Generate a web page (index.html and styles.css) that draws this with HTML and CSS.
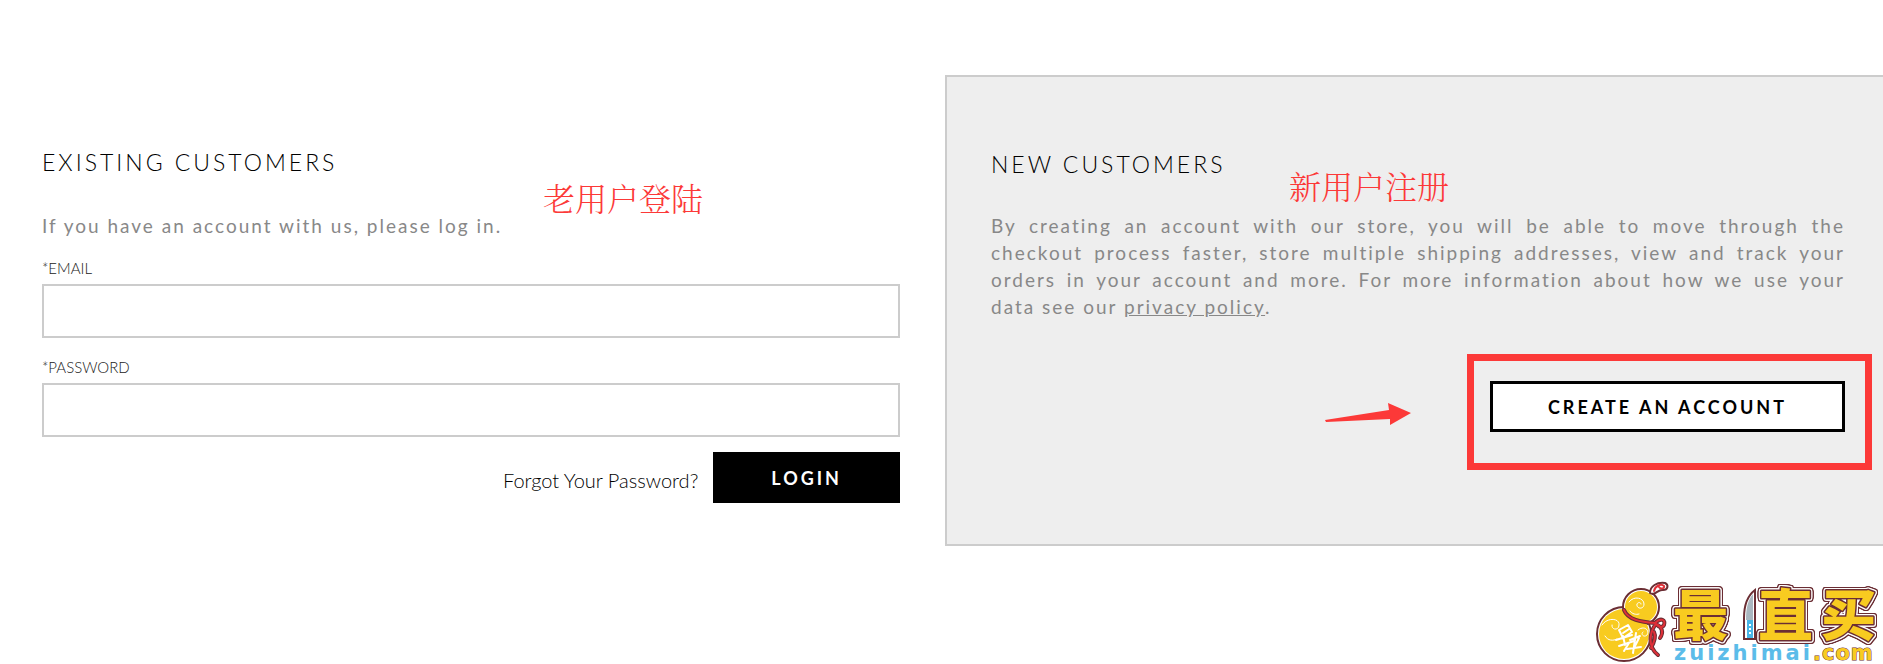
FILE: index.html
```html
<!DOCTYPE html>
<html lang="en">
<head>
<meta charset="utf-8">
<title>Login</title>
<link rel="stylesheet" href="styles.css">
</head>
<body>
<main class="columns">
  <section class="existing">
    <h2 class="title">EXISTING CUSTOMERS</h2>
    <p class="copy">If you have an account with us, please log in.</p>
    <form class="form">
      <label class="label" for="email">*EMAIL</label>
      <input class="field" id="email" type="email">
      <label class="label" for="password">*PASSWORD</label>
      <input class="field" id="password" type="password">
      <div class="actions">
        <a class="forgot" href="#">Forgot Your Password?</a>
        <button class="btn btn-dark" type="submit">LOGIN</button>
      </div>
    </form>
    <span class="note note-login" lang="zh-CN">老用户登陆</span>
  </section>
  <section class="new">
    <h2 class="title">NEW CUSTOMERS</h2>
    <p class="copy copy-wide">By creating an account with our store, you will be able to move through the checkout process faster, store multiple shipping addresses, view and track your orders in your account and more. For more information about how we use your data see our <a class="policy" href="#">privacy policy</a>.</p>
    <div class="create">
      <svg class="arrow" width="88" height="24" viewBox="0 0 88 24" aria-hidden="true"><path d="M1 18 65 8 64 1 87 11 66 23V17L2 20Z" fill="#fc3938"/></svg>
      <button class="btn btn-light" type="button">CREATE AN ACCOUNT</button>
      <span class="highlight"></span>
    </div>
    <span class="note note-register" lang="zh-CN">新用户注册</span>
  </section>
</main>
<footer class="footer">
  <svg class="logo" width="290" height="84" viewBox="0 0 290 84" role="img" aria-label="最值买 zuizhimai.com">
    <g stroke-linecap="round" stroke-linejoin="round">
      <circle cx="31" cy="54" r="27" fill="#fff" stroke="#6b2e34" stroke-width="2"/>
      <circle cx="48" cy="27" r="18" fill="#fff" stroke="#6b2e34" stroke-width="2"/>
      <circle cx="31" cy="54" r="25" fill="#f8cb20"/>
      <circle cx="48" cy="27" r="16" fill="#f8cb20"/>
      <path d="M57 13C57 6 64 2 72 3c4 2 3 7-2 7-4-1-6 3-10 4Z" fill="#fff" stroke="#6b2e34" stroke-width="2"/>
      <path d="M61 11c1-5 7-8 10-5 1 2-3 4-5 1" fill="none" stroke="#df3038" stroke-width="2"/>
      <path d="M36 22c5-7 15-4 15 2 0 6-8 5-7 0 1-2 4-2 4 0M9 45c5-8 18-7 17 0 0 6-8 5-7 0M45 50c6-5 12 0 9 5-3 3-7-1-4-3M37 31c2 3 6 4 9 3M12 56c3 5 8 5 12 3" fill="none" stroke="#fff" stroke-width="1"/>
      <path d="M31 30c4 10 17 12 31 13M62 43c6-6 11-3 9 2-2 4-6 1-8-1 6 3 8 8 4 14M62 45c-5 8-8 21 3 30M61 52c2 4 1 9-3 16" fill="none" stroke="#6b2e34" stroke-width="4"/>
      <path d="M31 30c4 10 17 12 31 13M62 43c6-6 11-3 9 2-2 4-6 1-8-1 6 3 8 8 4 14M62 45c-5 8-8 21 3 30M61 52c2 4 1 9-3 16" fill="none" stroke="#df3038" stroke-width="2"/>
      <path d="m26 50 9-5 4 7-9 6ZM30 53l6-4M23 60l16-5M30 56l2 9M26 66l15-5M43 53l-3 20M37 60l10-4M31 71l5-8M34 69l14-2M46 58l-4 8" fill="none" stroke="#fff" stroke-width="2"/>
    </g>
    <g class="glyphs"><text x="80" y="55">最</text><text x="165" y="55">直</text><text x="228" y="55">买</text></g>
    <path d="M151 59V38c0-13 3-22 11-28v49Z" fill="#fff" stroke="#6b2e34" stroke-width="2"/>
    <path d="M153 40c0-13 2-20 7-26v26Z" fill="#aab7c0"/>
    <path d="M154 40h6v18h-6Z" fill="#49b5e8"/>
    <path d="M157 44v2M157 48v2M157 52v2" stroke="#fff" stroke-width="2"/>
    <text class="domain" x="81" y="80">zuizhimai</text>
    <text class="domain domain-tld" x="220" y="80">.com</text>
  </svg>
</footer>
</body>
</html>
```

FILE: styles.css
```css
* { box-sizing: border-box; }

body {
  margin: 0;
  background: #fff;
  color: #000;
  font-family: "Century Gothic", Lato, sans-serif;
  font-weight: 400;
  overflow-x: hidden;
}

/* The panel's right edge runs just past the window. */
.columns {
  display: grid;
  grid-template-columns: 1fr 1fr;
  margin: 75px -7px 0 0;
}

.existing {
  position: relative;
  padding: 72px 45px 0 42px;
}

.new {
  position: relative;
  padding: 72px 43px 112px 44px;
  border: 2px solid #ccc;
  background: #eee;
}

.title {
  margin: 0 0 35px;
  font-size: 23px;
  line-height: 30px;
  font-weight: 300;
  letter-spacing: 3px;
}

.copy {
  margin: 0;
  color: #888;
  font-size: 19px;
  line-height: 27px;
  letter-spacing: 2px;
}

.new .title { margin-bottom: 33px; }
.copy-wide { text-align: justify; }
.policy { color: inherit; text-decoration: underline; }

.form {
  display: flex;
  flex-direction: column;
  margin-top: 19px;
}

.label {
  margin-bottom: 6px;
  color: #222;
  font-size: 15px;
  line-height: 20px;
  font-weight: 300;
}

.field {
  width: 100%;
  height: 54px;
  margin-bottom: 19px;
  padding: 0 12px;
  border: 2px solid #ccc;
  border-radius: 0;
  background: #fff;
  font: inherit;
  font-size: 18px;
}

.actions {
  display: flex;
  justify-content: flex-end;
  align-items: center;
  gap: 15px;
  margin-top: -4px;
}

.forgot {
  padding-top: 4px;
  color: #000;
  font-size: 20px;
  font-weight: 300;
  text-decoration: none;
}

.btn {
  height: 51px;
  padding: 0 55px;
  border: 3px solid #000;
  border-radius: 0;
  font-family: inherit;
  font-size: 18px;
  font-weight: 700;
  letter-spacing: 3px;
}

.btn-dark { background: #000; color: #fff; }
.btn-light { background: #fff; color: #000; }

.create {
  position: relative;
  display: flex;
  justify-content: flex-end;
  align-items: center;
  gap: 78px;
  margin-top: 61px;
}

.arrow { margin-top: 14px; }

.highlight {
  position: absolute;
  top: -27px;
  right: -27px;
  width: 405px;
  height: 116px;
  border: 7px solid #fc3938;
  pointer-events: none;
}

.note {
  position: absolute;
  color: #fc3938;
  font-family: "Noto Serif CJK SC", "Noto Sans CJK SC", serif;
  font-size: 32px;
  line-height: 40px;
  font-weight: 300;
}

.note-login { top: 102px; left: 543px; }
.note-register { top: 88px; left: 342px; }

.footer {
  display: flex;
  justify-content: flex-end;
  margin-top: 34px;
}

.logo { display: block; overflow: visible; }

.glyphs {
  fill: #f8cb20;
  stroke: #6b2e34;
  stroke-width: 3px;
  stroke-linejoin: round;
  paint-order: stroke;
  font-family: "Noto Sans CJK SC", sans-serif;
  font-size: 55px;
  font-weight: 900;
  filter: drop-shadow(1px 0 #fff) drop-shadow(-1px 0 #fff) drop-shadow(0 1px #fff) drop-shadow(0 -1px #fff)
    drop-shadow(1px 0 #6b2e34) drop-shadow(-1px 0 #6b2e34) drop-shadow(0 1px #6b2e34) drop-shadow(0 -1px #6b2e34);
}

.domain {
  fill: #5bbce9;
  font-family: "DejaVu Sans", sans-serif;
  font-size: 21px;
  font-weight: 700;
  letter-spacing: 3px;
}

.domain-tld { fill: #f8cb20; stroke: #6b2e34; stroke-width: 1px; paint-order: stroke; letter-spacing: 1px; }
```
